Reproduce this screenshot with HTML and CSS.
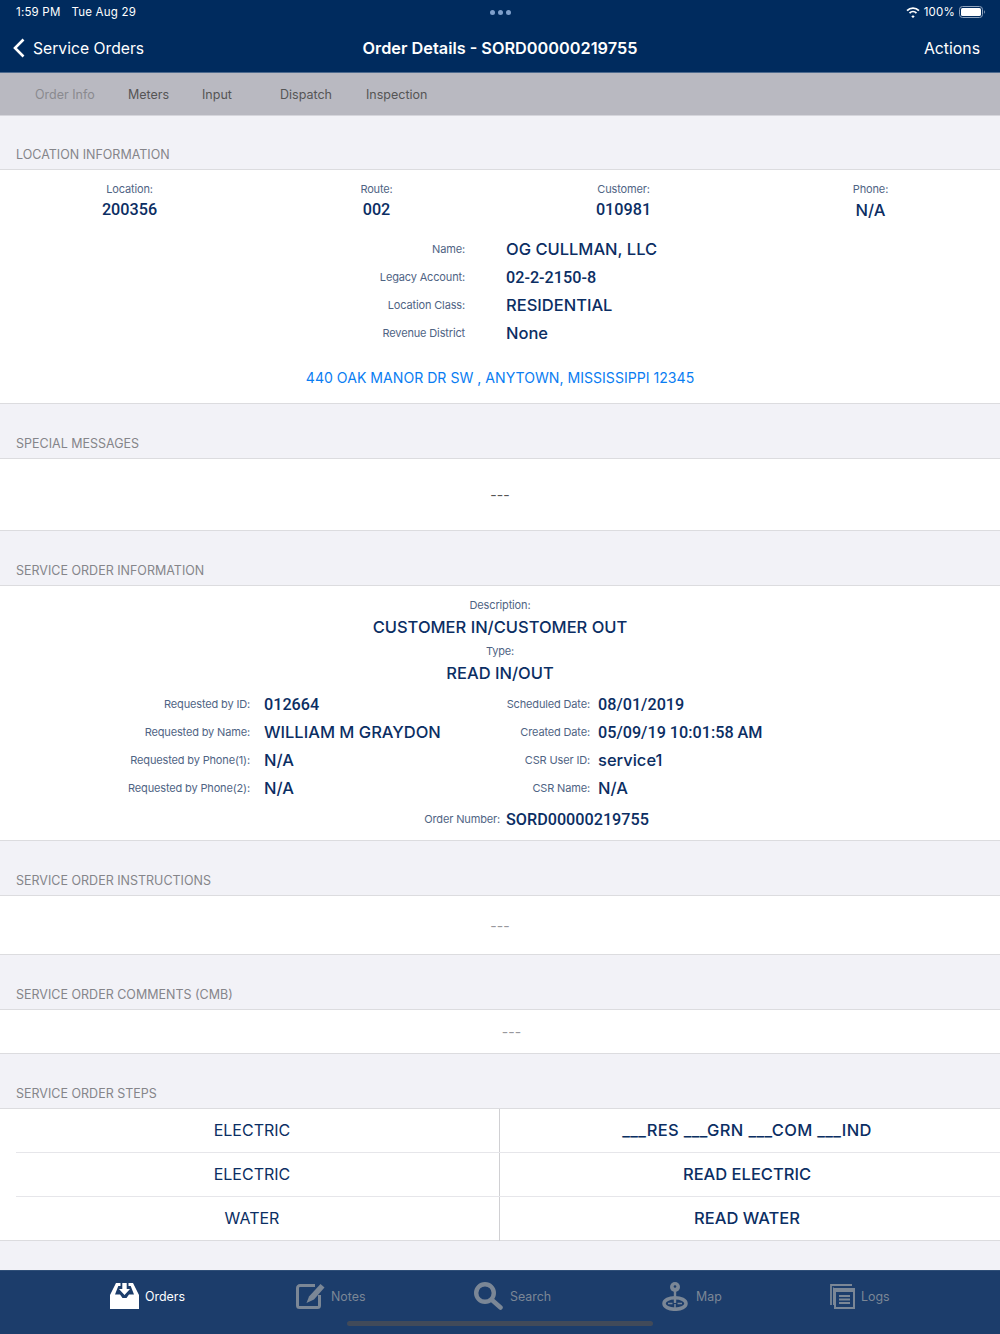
FILE: index.html
```html
<!DOCTYPE html>
<html lang="en">
<head>
<meta charset="utf-8">
<title>Order Details</title>
<link rel="stylesheet" href="styles.css">
</head>
<body>
<div class="app">
  <header class="top">
    <div class="status">
      <div class="status-left"><span>1:59 PM</span><span>Tue Aug 29</span></div>
      <div class="dots"><i></i><i></i><i></i></div>
      <div class="status-right">
        <svg class="wifi" width="14" height="11" viewBox="0 0 14 11"><path d="M7 8.200l1.700 1.300L7 11 5.300 9.500zM2.900 5.400a5.900 5.900 0 0 1 8.200 0L9.800 6.700a4 4 0 0 0-5.600 0zM.4 3a9.400 9.400 0 0 1 13.200 0l-1.300 1.300a7.500 7.500 0 0 0-10.600 0z" fill="#fff"/></svg>
        <span>100%</span>
        <svg class="battery" width="26" height="12" viewBox="0 0 26 12"><rect x=".5" y=".5" width="23" height="11" rx="3" fill="none" stroke="#8fa3bd"/><rect x="2" y="2" width="20" height="8" rx="1.600" fill="#fff"/><path d="M25 4.200c.6.300.9.900.9 1.800s-.3 1.500-.9 1.800z" fill="#8fa3bd"/></svg>
      </div>
    </div>
    <nav class="nav">
      <div class="nav-back">
        <svg width="12" height="20" viewBox="0 0 12 20"><path d="M10.500 1.500L2 10l8.500 8.500" fill="none" stroke="#fff" stroke-width="2.600"/></svg>
        <span>Service Orders</span>
      </div>
      <div class="nav-title">Order Details - SORD00000219755</div>
      <div class="nav-action">Actions</div>
    </nav>
  </header>

  <div class="tabs">
    <span class="tab tab-order muted">Order Info</span>
    <span class="tab tab-meters">Meters</span>
    <span class="tab tab-input">Input</span>
    <span class="tab tab-dispatch">Dispatch</span>
    <span class="tab tab-inspection">Inspection</span>
  </div>

  <main class="content">
    <h2 class="sec-head">LOCATION INFORMATION</h2>
    <section class="card card-location">
      <div class="four">
        <div class="stat"><div class="lbl">Location:</div><div class="val num">200356</div></div>
        <div class="stat"><div class="lbl">Route:</div><div class="val num">002</div></div>
        <div class="stat"><div class="lbl">Customer:</div><div class="val num">010981</div></div>
        <div class="stat"><div class="lbl">Phone:</div><div class="val">N/A</div></div>
      </div>
      <div class="pairs pairs-loc">
        <div class="pair"><span class="lbl">Name:</span><span class="val">OG CULLMAN, LLC</span></div>
        <div class="pair"><span class="lbl">Legacy Account:</span><span class="val num">02-2-2150-8</span></div>
        <div class="pair"><span class="lbl">Location Class:</span><span class="val">RESIDENTIAL</span></div>
        <div class="pair"><span class="lbl">Revenue District</span><span class="val">None</span></div>
      </div>
      <div class="address">440 OAK MANOR DR SW , ANYTOWN, MISSISSIPPI 12345</div>
    </section>

    <h2 class="sec-head">SPECIAL MESSAGES</h2>
    <section class="card card-msg"><span class="dash dark">---</span></section>

    <h2 class="sec-head">SERVICE ORDER INFORMATION</h2>
    <section class="card card-order">
      <div class="stack">
        <div class="lbl">Description:</div>
        <div class="val big">CUSTOMER IN/CUSTOMER OUT</div>
        <div class="lbl lbl-type">Type:</div>
        <div class="val big">READ IN/OUT</div>
      </div>
      <div class="two">
        <div class="pairs pairs-a">
          <div class="pair"><span class="lbl">Requested by ID:</span><span class="val num">012664</span></div>
          <div class="pair"><span class="lbl">Requested by Name:</span><span class="val">WILLIAM M GRAYDON</span></div>
          <div class="pair"><span class="lbl">Requested by Phone(1):</span><span class="val">N/A</span></div>
          <div class="pair"><span class="lbl">Requested by Phone(2):</span><span class="val">N/A</span></div>
        </div>
        <div class="pairs pairs-b">
          <div class="pair"><span class="lbl">Scheduled Date:</span><span class="val num">08/01/2019</span></div>
          <div class="pair"><span class="lbl">Created Date:</span><span class="val num">05/09/19 10:01:58 AM</span></div>
          <div class="pair"><span class="lbl">CSR User ID:</span><span class="val">service1</span></div>
          <div class="pair"><span class="lbl">CSR Name:</span><span class="val">N/A</span></div>
        </div>
      </div>
      <div class="pair pair-order"><span class="lbl">Order Number:</span><span class="val num">SORD00000219755</span></div>
    </section>

    <h2 class="sec-head">SERVICE ORDER INSTRUCTIONS</h2>
    <section class="card card-instr"><span class="dash">---</span></section>

    <h2 class="sec-head">SERVICE ORDER COMMENTS (CMB)</h2>
    <section class="card card-comments"><span class="dash">---</span></section>

    <h2 class="sec-head">SERVICE ORDER STEPS</h2>
    <section class="card card-steps">
      <div class="step"><div class="step-l">ELECTRIC</div><div class="step-r step-wide">___RES ___GRN ___COM ___IND</div></div>
      <div class="step"><div class="step-l">ELECTRIC</div><div class="step-r">READ ELECTRIC</div></div>
      <div class="step"><div class="step-l">WATER</div><div class="step-r">READ WATER</div></div>
    </section>
  </main>

  <footer class="bar">
    <div class="bar-items">
      <div class="item active item-orders">
        <svg width="29" height="26" viewBox="0 0 29 26"><path d="M6 0h4.500v3H8.300L5 11.500h5l2.500 3.500h4l2.500-3.500h5L20.700 3h-2.200V0H23l6 12v14H0V12z" fill="#fff"/><path d="M12.300 0h4.400v6H20l-5.500 6L9 6h3.300z" fill="#fff"/></svg>
        <span>Orders</span>
      </div>
      <div class="item item-notes">
        <svg width="29" height="26" viewBox="0 0 29 26"><path d="M19 2.500H4A2.500 2.500 0 0 0 1.500 5v17.500A2 2 0 0 0 3.500 24.500h18a2 2 0 0 0 2-2V12" fill="none" stroke="#7b8796" stroke-width="3"/><path d="M24.500 1l4 3.500L18 16.500l-7.500 3.500 2.500-6.500z" fill="#7b8796"/></svg>
        <span>Notes</span>
      </div>
      <div class="item item-search">
        <svg width="29" height="28" viewBox="0 0 29 28"><circle cx="11" cy="11" r="8.800" fill="none" stroke="#7b8796" stroke-width="4.400"/><path d="M18 18l8.500 7.500" stroke="#7b8796" stroke-width="4.500" stroke-linecap="round"/></svg>
        <span>Search</span>
      </div>
      <div class="item item-map">
        <svg width="26" height="29" viewBox="0 0 26 29"><ellipse cx="13" cy="21.500" rx="11" ry="5.800" fill="none" stroke="#7b8796" stroke-width="3.500"/><path d="M13 7v14" stroke="#7b8796" stroke-width="2.400"/><path d="M13 22v5M6 21.500h4.500M15.500 21.500H20" stroke="#7b8796" stroke-width="1.500"/><circle cx="13" cy="5" r="5" fill="#7b8796"/><circle cx="13" cy="4.500" r="1.300" fill="#1c3d6b"/></svg>
        <span>Map</span>
      </div>
      <div class="item item-logs">
        <svg width="25" height="25" viewBox="0 0 25 25"><path d="M1 21V1h21" fill="none" stroke="#7b8796" stroke-width="1.800"/><path d="M3.500 21V3.500" fill="none" stroke="#7b8796" stroke-width="1"/><rect x="5" y="5" width="19" height="19" fill="none" stroke="#7b8796" stroke-width="2"/><path d="M5 6.500h19" stroke="#7b8796" stroke-width="3"/><path d="M9 12h11M9 15.500h11M9 19h11" stroke="#7b8796" stroke-width="1.800"/></svg>
        <span>Logs</span>
      </div>
    </div>
    <div class="home"></div>
  </footer>
</div>
</body>
</html>
```
FILE: styles.css
```css
* { box-sizing: border-box; }
html, body { margin: 0; padding: 0; }
body { font-family: Inter, "Liberation Sans", sans-serif; background: #f2f2f7; }
.app { width: 1000px; height: 1334px; display: flex; flex-direction: column; overflow: hidden; }

.top { background: #002b5e; color: #fff; height: 73px; border-bottom: 1px solid #4d6a8e; flex: none; }
.status { height: 24px; display: grid; grid-template-columns: 1fr auto 1fr; align-items: center; padding: 0 15px 0 16px; font-size: 11.500px; letter-spacing: .2px; }
.status-left { display: flex; gap: 11px; }
.dots { display: flex; gap: 3px; }
.dots i { width: 5px; height: 5px; border-radius: 50%; background: #7fa0cc; }
.status-right { display: flex; justify-content: flex-end; align-items: center; gap: 4px; }
.nav { height: 48px; display: grid; grid-template-columns: 1fr auto 1fr; align-items: center; padding: 0 20px; }
.nav-back { display: flex; align-items: center; gap: 8px; font-size: 15.700px; margin-left: -7px; }
.nav-title { font-size: 16.300px; font-weight: 600; }
.nav-action { text-align: right; font-size: 15.800px; }

.tabs { height: 43px; flex: none; background: #b9b9c1; border-bottom: 1px solid #d6d6dc; display: flex; align-items: center; font-size: 12.500px; color: #555; padding-left: 35px; }
.tab { display: block; }
.muted { color: #8a8a8f; }
.tab-order { width: 93px; }
.tab-meters { width: 74px; }
.tab-input { width: 78px; }
.tab-dispatch { width: 86px; }

.content { flex: 1; display: flex; flex-direction: column; }
.sec-head { margin: 0; height: 54px; padding: 0 16px 6px; display: flex; align-items: flex-end; font-size: 12.500px; line-height: 16px; font-weight: 400; color: #85858a; flex: none; }
.sec-head:first-child { height: 53px; }
.card { background: #fff; border-top: 1px solid #dcdcdf; border-bottom: 1px solid #dcdcdf; flex: none; }
.lbl { font-size: 11px; letter-spacing: -.15px; color: #4f6484; white-space: nowrap; }
.val { font-size: 16.500px; font-weight: 500; color: #0b2e63; white-space: nowrap; }
.num { font-family: Roboto, Inter, sans-serif; font-size: 16.200px; }

.card-location { height: 235px; padding-top: 11px; }
.four { display: grid; grid-template-columns: repeat(4, 247px); justify-content: start; padding-left: 6px; text-align: center; }
.stat .lbl { line-height: 16px; }
.stat .val { line-height: 26px; }
.pairs { display: flex; flex-direction: column; }
.pair { display: flex; align-items: center; height: 28px; }
.pair .lbl { text-align: right; flex: none; }
.pairs-loc { margin-top: 12px; }
.pairs-loc .lbl { width: 465px; margin-right: 41px; }
.address { margin-top: 20px; text-align: center; font-size: 14.100px; line-height: 22px; color: #0a7df2; }

.dash { font-size: 14px; color: #98989d; }
.dash.dark { color: #555; }
.card-msg { height: 73px; display: flex; align-items: center; justify-content: center; }
.card-instr { height: 60px; display: flex; align-items: center; justify-content: center; }
.card-comments { height: 45px; display: flex; align-items: center; justify-content: center; padding-left: 23px; }

.card-order { height: 256px; padding-top: 11px; }
.stack { text-align: center; }
.stack .lbl { line-height: 16px; }
.stack .big { line-height: 26px; margin-top: 1px; }
.lbl-type { margin-top: 3px; }
.two { display: grid; grid-template-columns: 334px 1fr; margin-top: 4px; height: 112px; }
.pairs-a .lbl { width: 250px; margin-right: 14px; }
.pairs-b .lbl { width: 256px; margin-right: 8px; }
.pair-order { margin-top: 3px; height: 28px; }
.pair-order .lbl { width: 500px; margin-right: 6px; }

.card-steps { height: 133px; }
.step { height: 44px; display: grid; grid-template-columns: 500px 500px; position: relative; text-align: center; font-size: 16px; line-height: 43px; color: #0b2e63; }
.step + .step::before { content: ""; position: absolute; left: 16px; right: 0; top: -1px; border-top: 1px solid #e6e6ea; }
.step-l { border-right: 1px solid #d0d0d3; padding-left: 6px; padding-right: 1px; font-weight: 400; }
.step-r { font-size: 16.500px; font-weight: 500; padding-right: 6px; }
.step-wide { letter-spacing: .35px; }

.bar { margin-top: auto; height: 64px; flex: none; background: #1c3d6b; border-top: 1px solid #2f4f78; position: relative; }
.bar-items { display: flex; padding-left: 110px; }
.item { height: 50px; display: flex; align-items: center; gap: 6px; font-size: 12.400px; color: #7b8796; }
.item.active { color: #fff; }
.item-orders { width: 186px; }
.item-notes { width: 178px; }
.item-search { width: 188px; gap: 7px; }
.item-map { width: 168px; gap: 8px; }
.home { position: absolute; left: 347px; bottom: 8px; width: 306px; height: 5px; border-radius: 3px; background: #414a59; }
```
